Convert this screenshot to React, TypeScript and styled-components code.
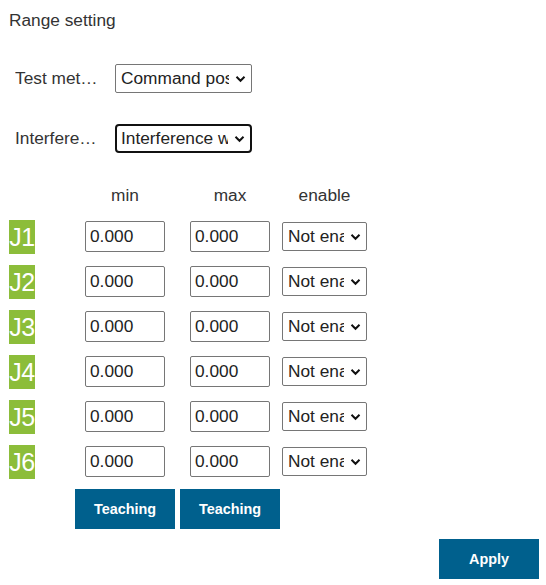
import React from "react";
import styled, { createGlobalStyle } from "styled-components";

const Global = createGlobalStyle`
  html, body { margin: 0; padding: 0; background: #fff; }
  body { font-family: "Liberation Sans", Arial, sans-serif; color: #333; }
`;

const Page = styled.div`
  width: 546px;
  height: 585px;
  box-sizing: border-box;
  padding: 10px 7px 0 9px;
  display: flex;
  flex-direction: column;
`;

const Title = styled.div`
  font-size: 17.3px;
  line-height: 20px;
`;

const FormRow = styled.div<{ $mt: number }>`
  display: flex;
  align-items: center;
  padding-left: 6px;
  margin-top: ${(p) => p.$mt}px;
`;

const Label = styled.div`
  width: 84px;
  margin-right: 16px;
  font-size: 17.3px;
  white-space: nowrap;
  overflow: hidden;
  text-overflow: ellipsis;
`;

const SelectWrap = styled.div<{ $w: number; $h: number; $focus?: boolean }>`
  position: relative;
  width: ${(p) => p.$w}px;
  height: ${(p) => p.$h}px;
  box-sizing: border-box;
  border: ${(p) => (p.$focus ? "2px solid #111" : "1px solid #767676")};
  border-radius: ${(p) => (p.$focus ? 4 : 2)}px;
  background: #fff;
  display: flex;
  align-items: center;
  overflow: hidden;
`;

const SelectText = styled.span<{ $pl: number }>`
  flex: 1;
  overflow: hidden;
  white-space: nowrap;
  font-size: 17.3px;
  color: #222;
  padding-left: ${(p) => p.$pl}px;
  margin-right: 22px;
`;

const Chevron = styled.svg`
  position: absolute;
  right: 5px;
  top: 50%;
  margin-top: -4px;
`;

const Grid = styled.div`
  display: grid;
  grid-template-columns: 76px 105px 92px 85px;
  grid-auto-rows: 45px;
  grid-template-rows: 40px;
  align-items: center;
  margin-top: 21px;
`;

const Head = styled.div<{ $w: number }>`
  width: ${(p) => p.$w}px;
  text-align: center;
  font-size: 17.3px;
  padding-top: 3px;
`;

const Joint = styled.div`
  width: 26px;
  height: 34px;
  background: #8cbd3a;
  color: #fff;
  font-size: 25px;
  line-height: 34px;
  text-align: center;
  letter-spacing: -0.5px;
`;

const NumInput = styled.input`
  width: 80px;
  height: 31px;
  box-sizing: border-box;
  border: 1px solid #767676;
  border-radius: 2px;
  padding: 0 0 0 4px;
  font-family: "Liberation Sans", Arial, sans-serif;
  font-size: 17.3px;
  color: #222;
  outline: none;
`;

const BtnCell = styled.div`
  width: 80px;
  display: flex;
  justify-content: center;
  align-self: start;
  padding-top: 5px;
`;

const Button = styled.button`
  flex-shrink: 0;
  width: 100px;
  height: 40px;
  border: none;
  background: #00608d;
  color: #fff;
  font-family: "Liberation Sans", Arial, sans-serif;
  font-weight: bold;
  font-size: 14.4px;
  cursor: pointer;
  padding: 0;
`;

const Footer = styled.div`
  display: flex;
  justify-content: flex-end;
  margin-top: 10px;
`;

const ChevronIcon = () => (
  <Chevron width="11" height="8" viewBox="0 0 11 8">
    <path d="M1.5 1.8 L5.5 5.8 L9.5 1.8" fill="none" stroke="#111" strokeWidth="2" />
  </Chevron>
);

const FakeSelect = ({ text, w, h, focus, pl }: { text: string; w: number; h: number; focus?: boolean; pl: number }) => (
  <SelectWrap $w={w} $h={h} $focus={focus}>
    <SelectText $pl={pl}>{text}</SelectText>
    <ChevronIcon />
  </SelectWrap>
);

const joints = ["J1", "J2", "J3", "J4", "J5", "J6"];

export default function App() {
  return (
    <>
      <Global />
      <Page>
        <Title>Range setting</Title>
        <FormRow $mt={34}>
          <Label>Test method</Label>
          <FakeSelect text="Command position" w={137} h={29} pl={5} />
        </FormRow>
        <FormRow $mt={31}>
          <Label>Interference</Label>
          <FakeSelect text="Interference warning" w={137} h={29} focus pl={4} />
        </FormRow>
        <Grid>
          <div />
          <Head $w={80}>min</Head>
          <Head $w={80}>max</Head>
          <Head $w={85}>enable</Head>
          {joints.map((j) => (
            <React.Fragment key={j}>
              <Joint>{j}</Joint>
              <NumInput defaultValue="0.000" />
              <NumInput defaultValue="0.000" />
              <FakeSelect text="Not enabled" w={85} h={29} pl={5} />
            </React.Fragment>
          ))}
          <div />
          <BtnCell>
            <Button>Teaching</Button>
          </BtnCell>
          <BtnCell>
            <Button>Teaching</Button>
          </BtnCell>
        </Grid>
        <Footer>
          <Button>Apply</Button>
        </Footer>
      </Page>
    </>
  );
}
